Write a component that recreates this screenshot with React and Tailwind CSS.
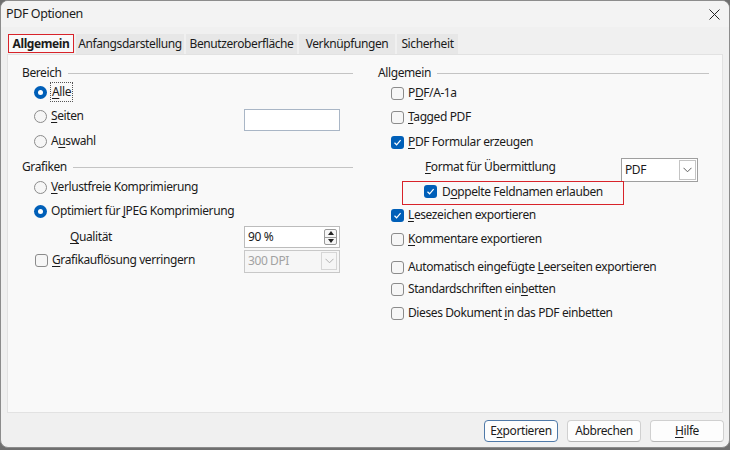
import React from "react";

const FONT = { fontFamily: '"Noto Sans", "Open Sans", sans-serif' };

// --- small widgets ---
const Radio = ({ checked }) =>
  checked ? (
    <div className="w-[13px] h-[13px] rounded-full bg-[#005fb8] flex items-center justify-center shrink-0">
      <div className="w-[5px] h-[5px] rounded-full bg-white" />
    </div>
  ) : (
    <div className="w-[13px] h-[13px] rounded-full border border-[#8b8b8b] bg-[#f6f6f6] shrink-0" />
  );

const Check = ({ checked }) =>
  checked ? (
    <div className="w-[13px] h-[13px] rounded-[3px] bg-[#005fb8] flex items-center justify-center shrink-0">
      <svg width="9" height="9" viewBox="0 0 9 9">
        <path d="M1.5 4.8 L3.6 6.8 L7.6 2.2" fill="none" stroke="white" strokeWidth="1.2" />
      </svg>
    </div>
  ) : (
    <div className="w-[13px] h-[13px] rounded-[3px] border border-[#8b8b8b] bg-[#f6f6f6] shrink-0" />
  );

const Chevron = ({ color = "#5f5f5f" }) => (
  <svg width="9" height="6" viewBox="0 0 9 6">
    <path d="M0.5 0.8 L4.5 4.8 L8.5 0.8" fill="none" stroke={color} strokeWidth="1" />
  </svg>
);

const Heading = ({ children, className = "" }) => (
  <div className={`h-[18px] flex items-center gap-[6px] ${className}`}>
    <span>{children}</span>
    <div className="flex-1 h-px bg-[#c4c4c4]" />
  </div>
);

const RadioRow = ({ checked, children, className = "", focus }) => (
  <div className={`h-[18px] flex items-center pl-[12px] gap-[4px] ${className}`}>
    <Radio checked={checked} />
    <span className={focus ? "outline outline-1 outline-dotted outline-[#555] px-px" : ""}>{children}</span>
  </div>
);

const CheckRow = ({ checked, children, className = "" }) => (
  <div className={`h-[18px] flex items-center pl-[13px] gap-[4px] ${className}`}>
    <Check checked={checked} />
    <span>{children}</span>
  </div>
);

const U = ({ children }) => <u className="underline-offset-[2px] decoration-1">{children}</u>;

const Button = ({ children, primary }) => (
  <div
    className={`w-[74px] h-[22px] rounded-[4px] bg-[#fdfdfd] flex items-center justify-center border ${
      primary ? "border-[#4f79a8]" : "border-[#d0d0d0] border-b-[#b5b5b5]"
    }`}
  >
    {children}
  </div>
);

export default function App() {
  const tabs = [
    { label: "Anfangsdarstellung", w: "w-[108px]" },
    { label: "Benutzeroberfläche", w: "w-[111px]" },
    { label: "Verknüpfungen", w: "w-[96px]" },
    { label: "Sicherheit", w: "w-[61px]" },
  ];

  return (
    <div className="w-[730px] h-[450px] bg-[#6f6f6f] text-[12px] tracking-[-0.4px] text-[#1b1b1b]" style={FONT}>
      <div className="h-[448px] rounded-[8px] border border-[#8c8c8c] bg-[#f0f0f0] overflow-hidden flex flex-col">
        {/* title bar */}
        <div className="h-[26px] flex items-center justify-between pl-[5px] pr-[9px] bg-[#f3f3f3]">
          <span className="text-[12.5px]">PDF Optionen</span>
          <svg width="11" height="11" viewBox="0 0 11 11">
            <path d="M0.5 0.5 L10.5 10.5 M10.5 0.5 L0.5 10.5" stroke="#222" strokeWidth="1" />
          </svg>
        </div>

        {/* tabs */}
        <div className="mt-[7px] pl-[7px] flex items-end gap-[2px] h-[20px]">
          <div className="w-[66px] h-[19px] self-start bg-[#f9f9f9] border-[1.5px] border-[#d8232a] flex items-center justify-center font-bold">
            Allgemein
          </div>
          {tabs.map((t) => (
            <div key={t.label} className={`${t.w} h-[20px] bg-[#e7e7e7] flex items-center justify-center`}>
              {t.label}
            </div>
          ))}
        </div>

        {/* panel */}
        <div className="mx-[6px] h-[359px] bg-[#f9f9f9] border border-[#e2e2e2] pt-[9px] pl-[14px] pr-[13px] grid grid-cols-[331px_1fr] gap-x-[25px]">
          {/* left column */}
          <div className="flex flex-col">
            <Heading>Bereich</Heading>
            <RadioRow checked focus className="mt-[1px]">
              <U>A</U>lle
            </RadioRow>
            <div className="mt-[6px] h-[18px] flex items-center justify-between">
              <RadioRow>
                <U>S</U>eiten
              </RadioRow>
              <div className="w-[96px] h-[22px] mt-[8px] mr-[13px] bg-white border border-[#a9b6c6]" />
            </div>
            <RadioRow className="mt-[7px]">
              A<U>u</U>swahl
            </RadioRow>
            <Heading className="mt-[8px]">Grafiken</Heading>
            <RadioRow className="mt-[2px]">
              <U>V</U>erlustfreie Komprimierung
            </RadioRow>
            <RadioRow checked className="mt-[6px]">
              Optimiert für <U>J</U>PEG Komprimierung
            </RadioRow>
            <div className="mt-[8px] h-[18px] flex items-center justify-between">
              <span className="pl-[48px]">
                <U>Q</U>ualität
              </span>
              <div className="w-[96px] h-[22px] mr-[13px] bg-white border border-[#bcbcbc] flex items-center justify-between pl-[3px] pr-[2px]">
                <span>90 %</span>
                <div className="w-[13px] h-[16px] border border-[#9a9a9a] rounded-[2px] bg-[#f6f6f6] flex flex-col">
                  <div className="flex-1 flex items-center justify-center border-b border-[#9a9a9a]">
                    <svg width="6" height="4" viewBox="0 0 6 4"><path d="M0 4 L3 0 L6 4 Z" fill="#222" /></svg>
                  </div>
                  <div className="flex-1 flex items-center justify-center">
                    <svg width="6" height="4" viewBox="0 0 6 4"><path d="M0 0 L3 4 L6 0 Z" fill="#222" /></svg>
                  </div>
                </div>
              </div>
            </div>
            <div className="mt-[5px] h-[18px] flex items-center justify-between">
              <CheckRow className="pl-[12px]">
                <U>G</U>rafikauflösung verringern
              </CheckRow>
              <div className="w-[96px] h-[23px] mt-[2px] mr-[13px] bg-[#f6f6f6] border border-[#c8c8c8] flex items-center justify-between pl-[3px] pr-[2px] text-[#a2a2a2]">
                <span>300 DPI</span>
                <div className="w-[16px] h-[18px] border border-[#d6d6d6] flex items-center justify-center">
                  <Chevron color="#b0b0b0" />
                </div>
              </div>
            </div>
          </div>

          {/* right column */}
          <div className="flex flex-col">
            <Heading>Allgemein</Heading>
            <CheckRow className="mt-[2px]">
              P<U>D</U>F/A-1a
            </CheckRow>
            <CheckRow className="mt-[6px]">
              <U>T</U>agged PDF
            </CheckRow>
            <CheckRow checked className="mt-[7px]">
              <U>P</U>DF Formular erzeugen
            </CheckRow>
            <div className="mt-[7px] h-[18px] flex items-center">
              <span className="pl-[47px] w-[243px]">
                <U>F</U>ormat für Übermittlung
              </span>
              <div className="w-[77px] h-[24px] mt-[5px] bg-white border border-[#9f9f9f] flex items-center justify-between pl-[3px] pr-[1px]">
                <span>PDF</span>
                <div className="w-[17px] h-[20px] border border-[#c4c4c4] flex items-center justify-center">
                  <Chevron />
                </div>
              </div>
            </div>
            <div className="mt-[5px] ml-[24px] w-[222px] h-[24px] border border-[#d8232a] flex items-center pl-[21px] pb-[3px] gap-[5px]">
              <Check checked />
              <span>
                D<U>o</U>ppelte Feldnamen erlauben
              </span>
            </div>
            <CheckRow checked className="mt-[1px]">
              <U>L</U>esezeichen exportieren
            </CheckRow>
            <CheckRow className="mt-[6px]">
              <U>K</U>ommentare exportieren
            </CheckRow>
            <CheckRow className="mt-[10px]">
              Automatisch eingefügte <U>L</U>eerseiten exportieren
            </CheckRow>
            <CheckRow className="mt-[4px]">
              Standardschriften ein<U>b</U>etten
            </CheckRow>
            <CheckRow className="mt-[6px]">
              Dieses Dokument <U>i</U>n das PDF einbetten
            </CheckRow>
          </div>
        </div>

        {/* buttons */}
        <div className="mt-[7px] pr-[5px] flex justify-end gap-[9px]">
          <Button primary>
            E<U>x</U>portieren
          </Button>
          <Button>Abbrechen</Button>
          <Button>
            <U>H</U>ilfe
          </Button>
        </div>
      </div>
    </div>
  );
}
